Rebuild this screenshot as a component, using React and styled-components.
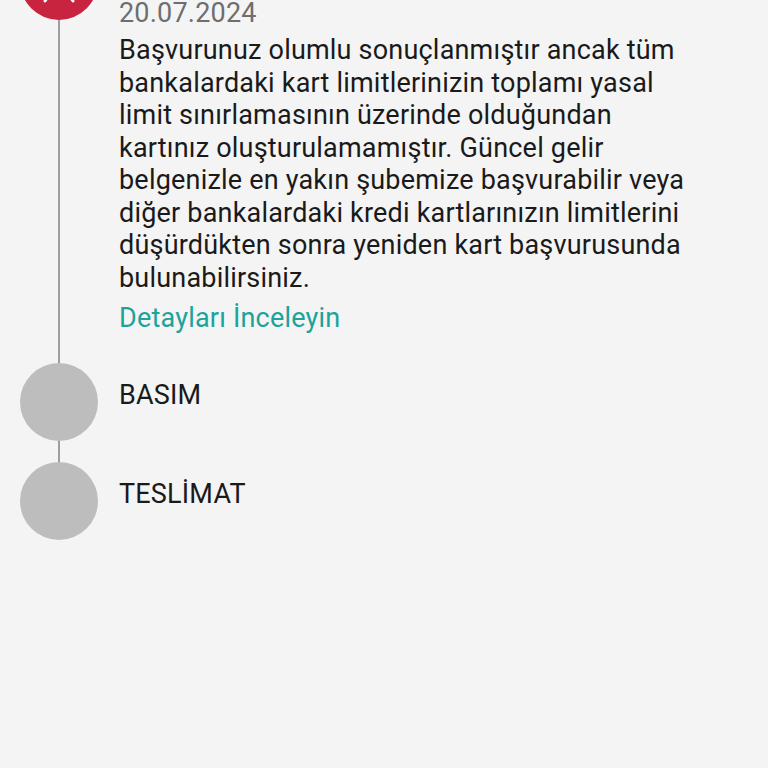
import React from "react";
import styled, { createGlobalStyle } from "styled-components";

const Global = createGlobalStyle`
  html, body { margin: 0; padding: 0; background: #f4f4f4; }
  body { font-family: Roboto, "Noto Sans", "Liberation Sans", sans-serif; overflow: hidden; }
`;

const Page = styled.div`
  width: 768px;
  height: 768px;
  overflow: hidden;
  background: #f4f4f4;
`;

const Timeline = styled.div`
  display: flex;
  flex-direction: column;
  margin-top: -58px;
  padding-left: 20px;
`;

const Item = styled.div`
  display: flex;
  gap: 21px;
`;

const Rail = styled.div`
  width: 78px;
  flex: 0 0 78px;
  display: flex;
  flex-direction: column;
  align-items: center;
`;

const Dot = styled.div`
  width: 78px;
  height: 78px;
  border-radius: 50%;
  flex: 0 0 78px;
  background: ${(p) => (p.$active ? "#c9243f" : "#bdbdbd")};
  display: flex;
  align-items: center;
  justify-content: center;
`;

const Connector = styled.div`
  width: 2px;
  flex: 1;
  min-height: 21px;
  margin-left: -1px;
  background: #9e9e9e;
`;

const Content = styled.div`
  width: 580px;
  padding-top: 16px;
  padding-bottom: ${(p) => (p.$last ? "0" : "28px")};
  font-size: 27px;
  line-height: 32.5px;
  letter-spacing: 0.2px;
  color: #1a1a1a;
`;

const Title = styled.div`
  color: #1a1a1a;
`;

const DateText = styled.div`
  margin-top: 6px;
  color: #6e6e6e;
`;

const Body = styled.p`
  margin: 5px 0 0;
  color: #1a1a1a;
`;

const Link = styled.a`
  display: block;
  margin-top: 8px;
  color: #1ba39c;
  text-decoration: none;
`;

const XIcon = () => (
  <svg width="32" height="44" viewBox="0 0 32 44" fill="none">
    <line x1="2" y1="2" x2="30" y2="42" stroke="#fff" strokeWidth="3" strokeLinecap="round" />
    <line x1="30" y1="2" x2="2" y2="42" stroke="#fff" strokeWidth="3" strokeLinecap="round" />
  </svg>
);

export default function App() {
  return (
    <Page>
      <Global />
      <Timeline>
        <Item>
          <Rail>
            <Dot $active>
              <XIcon />
            </Dot>
            <Connector />
          </Rail>
          <Content>
            <Title>DEĞERLENDİRME</Title>
            <DateText>20.07.2024</DateText>
            <Body>
              Başvurunuz olumlu sonuçlanmıştır ancak tüm bankalardaki kart limitlerinizin toplamı yasal
              limit sınırlamasının üzerinde olduğundan kartınız oluşturulamamıştır. Güncel gelir
              belgenizle en yakın şubemize başvurabilir veya diğer bankalardaki kredi kartlarınızın
              limitlerini düşürdükten sonra yeniden kart başvurusunda bulunabilirsiniz.
            </Body>
            <Link href="#">Detayları İnceleyin</Link>
          </Content>
        </Item>
        <Item>
          <Rail>
            <Dot />
            <Connector />
          </Rail>
          <Content>
            <Title>BASIM</Title>
          </Content>
        </Item>
        <Item>
          <Rail>
            <Dot />
          </Rail>
          <Content $last>
            <Title>TESLİMAT</Title>
          </Content>
        </Item>
      </Timeline>
    </Page>
  );
}
